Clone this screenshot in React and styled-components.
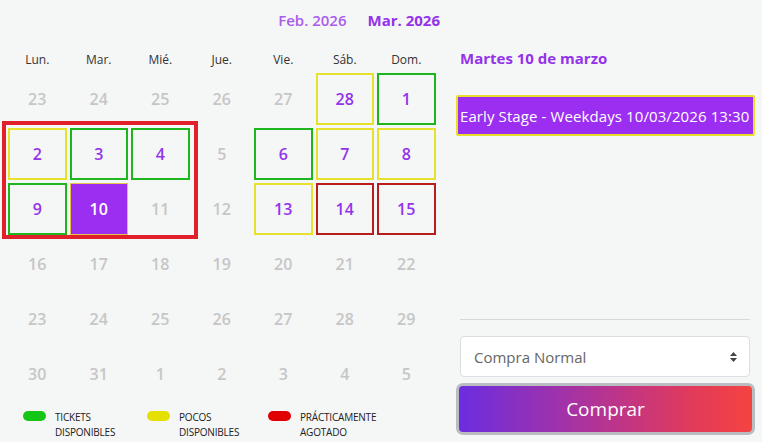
import React from "react";
import styled, { createGlobalStyle } from "styled-components";

const GlobalStyle = createGlobalStyle`
  body {
    margin: 0;
    background: #f5f6f6;
    font-family: "Open Sans", "Liberation Sans", sans-serif;
  }
`;

const weekdays = ["Lun.", "Mar.", "Mié.", "Jue.", "Vie.", "Sáb.", "Dom."];

// status: g = tickets, y = pocos, r = agotado, s = seleccionado, null = sin fecha
const days = [
  ["23", null], ["24", null], ["25", null], ["26", null], ["27", null], ["28", "y"], ["1", "g"],
  ["2", "y"], ["3", "g"], ["4", "g"], ["5", null], ["6", "g"], ["7", "y"], ["8", "y"],
  ["9", "g"], ["10", "s"], ["11", null], ["12", null], ["13", "y"], ["14", "r"], ["15", "r"],
  ["16", null], ["17", null], ["18", null], ["19", null], ["20", null], ["21", null], ["22", null],
  ["23", null], ["24", null], ["25", null], ["26", null], ["27", null], ["28", null], ["29", null],
  ["30", null], ["31", null], ["1", null], ["2", null], ["3", null], ["4", null], ["5", null],
];

const borders = {
  g: "#1fb51f",
  y: "#e6e12c",
  r: "#b91c1c",
  s: "#e3c54a",
};

const Page = styled.div`
  display: flex;
  height: 442px;
  overflow: hidden;
`;

const CalendarCol = styled.div`
  width: 456px;
  display: flex;
  flex-direction: column;
  position: relative;
`;

const MonthBar = styled.div`
  display: flex;
  justify-content: flex-end;
  gap: 21px;
  padding: 10px 16px 0 0;
  height: 22px;
  font-size: 15px;
`;

const Month = styled.span`
  color: ${(p) => (p.$active ? "#9333ea" : "#a95ded")};
  font-weight: ${(p) => (p.$active ? 700 : 600)};
`;

const Grid = styled.div`
  display: grid;
  grid-template-columns: repeat(7, 58.5px);
  column-gap: 3px;
  row-gap: 3px;
  padding-left: 8px;
`;

const Weekday = styled.div`
  text-align: center;
  font-size: 12px;
  color: #333;
  height: 18px;
  margin-top: 19px;
  margin-bottom: 1px;
`;

const Day = styled.div`
  height: 52px;
  box-sizing: border-box;
  display: flex;
  align-items: center;
  justify-content: center;
  font-size: 16px;
  font-weight: 600;
  color: ${(p) => (p.$status === "s" ? "#fff" : p.$status ? "#9333ea" : "#c6c6c6")};
  background: ${(p) => (p.$status === "s" ? "#9b2ef0" : "transparent")};
  border: ${(p) =>
    p.$status ? `${p.$status === "s" ? 1 : 2}px solid ${borders[p.$status]}` : "none"};
`;

const Highlight = styled.div`
  position: absolute;
  left: 2px;
  top: 121px;
  width: 196px;
  height: 118px;
  box-sizing: border-box;
  border: 4px solid #e0202a;
  pointer-events: none;
`;

const Legend = styled.div`
  display: flex;
  padding: 10px 0 0 23px;
`;

const LegendItem = styled.div`
  display: flex;
  width: ${(p) => p.$w}px;
  gap: 9px;
`;

const Pill = styled.span`
  width: 23px;
  height: 10px;
  border-radius: 5px;
  background: ${(p) => p.$c};
  margin-top: 1px;
  flex-shrink: 0;
`;

const LegendText = styled.span`
  font-size: 10px;
  line-height: 15px;
  color: #222;
  text-transform: uppercase;
  letter-spacing: -0.2px;
`;

const Side = styled.div`
  flex: 1;
  display: flex;
  flex-direction: column;
  padding: 0 7px 7px 0;
`;

const DateTitle = styled.div`
  color: #9333ea;
  font-weight: 700;
  font-size: 15px;
  line-height: 19px;
  height: 19px;
  margin: 49px 0 0 4px;
  flex-shrink: 0;
`;

const Session = styled.div`
  margin-top: 27px;
  height: 41px;
  flex-shrink: 0;
  box-sizing: border-box;
  display: flex;
  align-items: center;
  background: #9b2ef0;
  border: 2px solid #e6e02a;
  border-radius: 2px;
  color: #fff;
  font-size: 15px;
  padding: 0 2px;
  white-space: nowrap;
  letter-spacing: 0.1px;
  overflow: hidden;
  cursor: pointer;
`;

const Spacer = styled.div`
  flex: 1;
`;

const Rule = styled.hr`
  margin: 0 5px 16px 4px;
  border: 0;
  border-top: 1px solid #d6d8da;
  flex-shrink: 0;
`;

const SelectBox = styled.div`
  margin: 0 5px 0 4px;
  height: 41px;
  flex-shrink: 0;
  box-sizing: border-box;
  background: #fff;
  border: 1px solid #dcdfe2;
  border-radius: 4px;
  display: flex;
  align-items: center;
  justify-content: space-between;
  padding: 0 11px 0 13px;
  font-size: 15px;
  color: #666;
`;

const BuyButton = styled.button`
  margin-top: 6px;
  height: 52px;
  flex-shrink: 0;
  border: 3px solid #b9bdc1;
  border-radius: 7px;
  background: linear-gradient(90deg, #6b2de0 0%, #b03399 45%, #e23a5a 80%, #f44440 100%);
  color: #fff;
  font-family: inherit;
  font-size: 19px;
`;

const Arrows = () => (
  <svg width="9" height="12" viewBox="0 0 9 12">
    <path d="M4.5 1 L8 5 H1 Z M4.5 11 L8 7 H1 Z" fill="#444" />
  </svg>
);

const App = () => {
  return (
    <Page>
      <GlobalStyle />
      <CalendarCol>
        <MonthBar>
          <Month>Feb. 2026</Month>
          <Month $active>Mar. 2026</Month>
        </MonthBar>
        <Grid>
          {weekdays.map((w) => (
            <Weekday key={w}>{w}</Weekday>
          ))}
          {days.map(([n, s], i) => (
            <Day key={i} $status={s}>
              {n}
            </Day>
          ))}
        </Grid>
        <Highlight />
        <Legend>
          <LegendItem $w={124}>
            <Pill $c="#16c616" />
            <LegendText>Tickets<br />Disponibles</LegendText>
          </LegendItem>
          <LegendItem $w={121}>
            <Pill $c="#e6e000" />
            <LegendText>Pocos<br />Disponibles</LegendText>
          </LegendItem>
          <LegendItem $w={150}>
            <Pill $c="#e00000" />
            <LegendText>Prácticamente<br />Agotado</LegendText>
          </LegendItem>
        </Legend>
      </CalendarCol>
      <Side>
        <DateTitle>Martes 10 de marzo</DateTitle>
        <Session>Early Stage - Weekdays 10/03/2026 13:30</Session>
        <Spacer />
        <Rule />
        <SelectBox>
          Compra Normal
          <Arrows />
        </SelectBox>
        <BuyButton>Comprar</BuyButton>
      </Side>
    </Page>
  );
};

export default App;
